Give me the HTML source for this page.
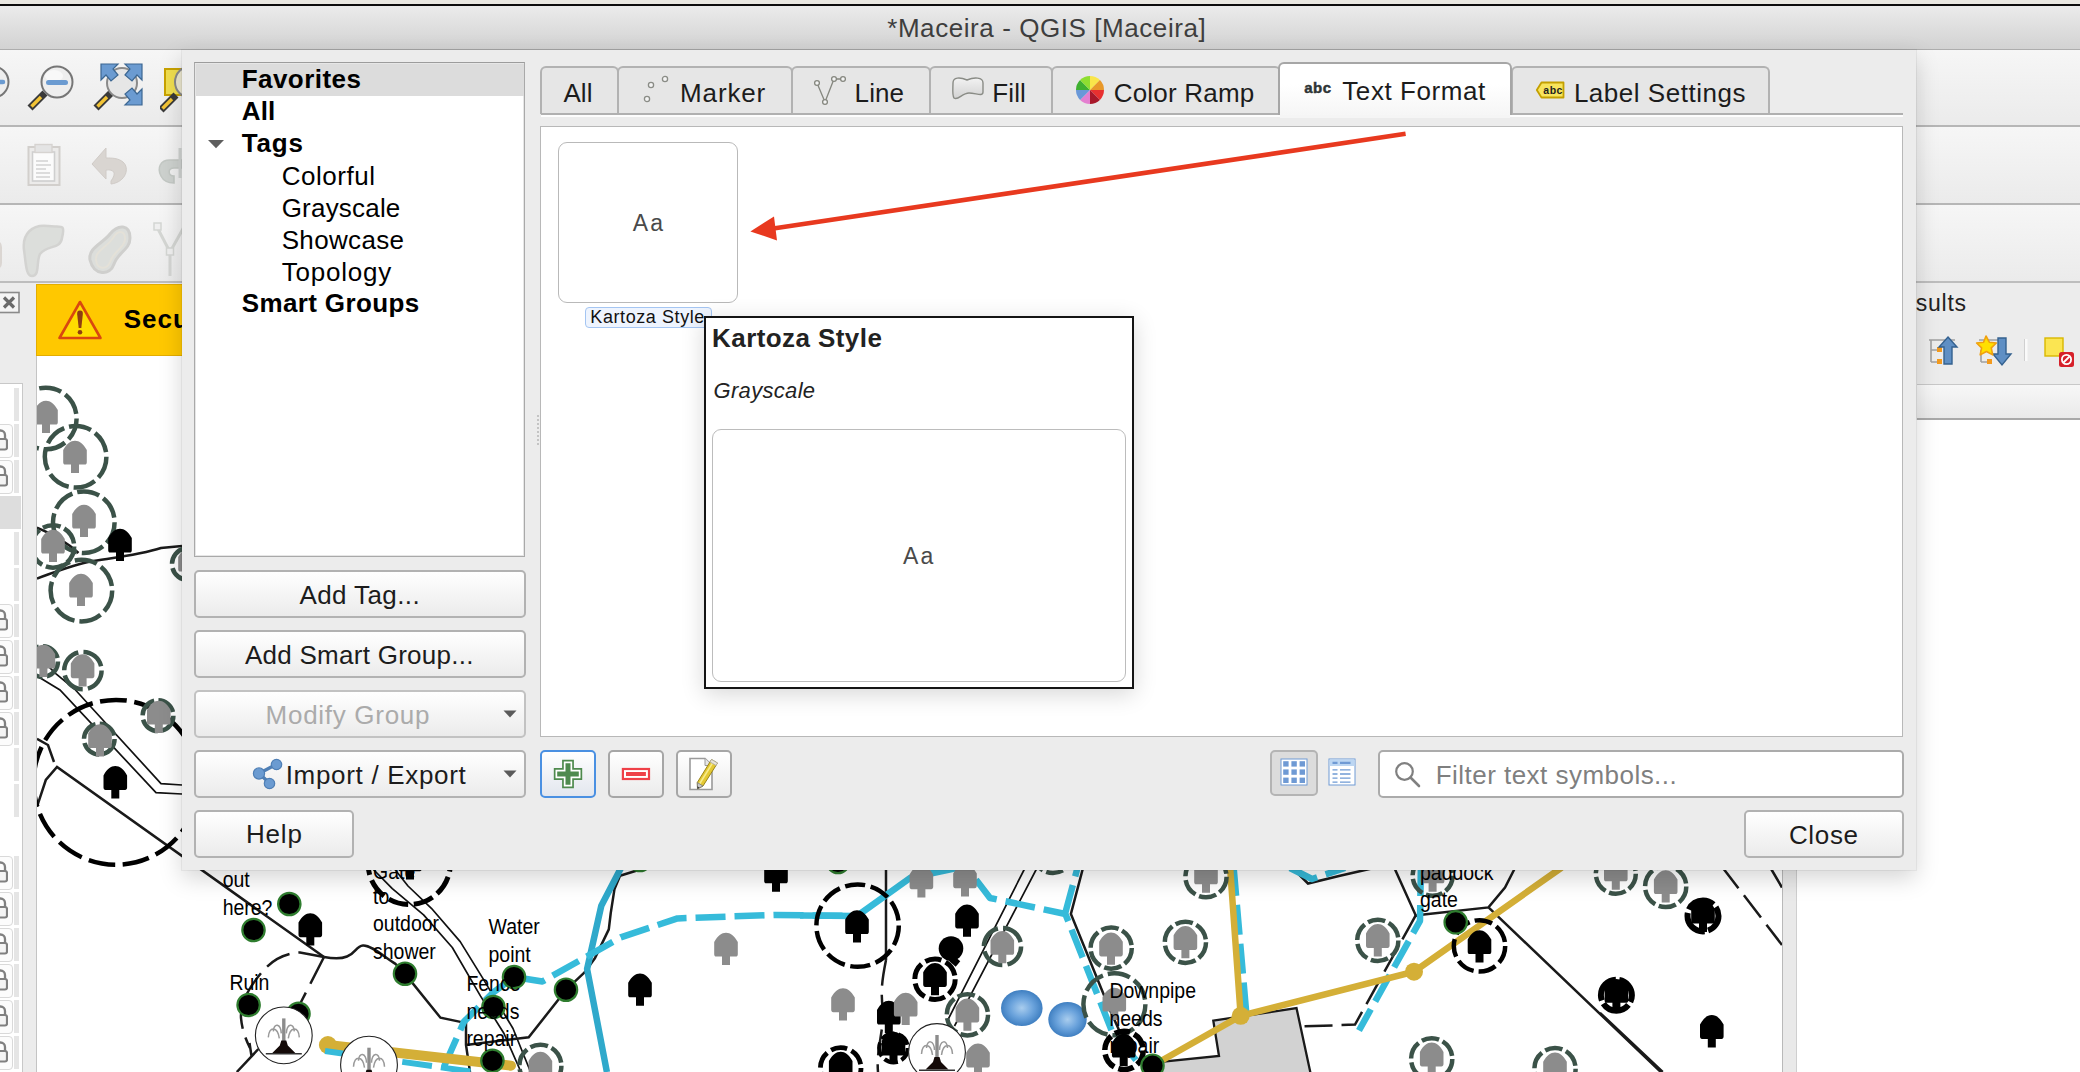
<!DOCTYPE html>
<html lang="en"><head><meta charset="utf-8"><title>*Maceira - QGIS [Maceira]</title>
<style>
html,body{margin:0;padding:0}
body{width:2080px;height:1072px;overflow:hidden;background:#ececec;font-family:"Liberation Sans", sans-serif;position:relative}
.a{position:absolute}
.t{position:absolute;white-space:nowrap}

.sep{position:absolute;left:0;width:2080px;height:2px;background:#b6b6b6}
.row{position:absolute;left:0;width:2080px;background:linear-gradient(#f6f6f6,#ebebeb)}

.dlg{position:absolute;left:182px;top:50px;width:1734px;height:820px;background:#ececec;box-shadow:0 8px 22px rgba(0,0,0,.17),0 0 0 1px rgba(0,0,0,.05)}
.btn{position:absolute;box-sizing:border-box;border:2px solid #b2b2b2;border-radius:5px;background:linear-gradient(#ffffff,#ebebeb)}
.tab{position:absolute;top:66px;height:48px;box-sizing:border-box;border:2px solid #b2b2b2;border-bottom:none;border-radius:6px 6px 0 0;background:#e6e6e6}

</style></head><body>
<div class="a" style="left:0;top:0;width:2080px;height:4px;background:#e9e7e1"></div>
<div class="a" style="left:0;top:4px;width:2080px;height:2px;background:#0c0c0c"></div>
<div class="a" style="left:0;top:6px;width:2080px;height:43px;background:linear-gradient(#ebebeb,#d2d2d2);border-bottom:1px solid #adadad"></div>
<span class="t" style="left:887.2px;top:12.5px;font-size:26px;line-height:31px;font-weight:normal;color:#3e3e3e;letter-spacing:0.57px;font-style:normal;">*Maceira - QGIS [Maceira]</span>
<div class="row" style="top:50px;height:75px"></div><div class="sep" style="top:125px"></div>
<div class="row" style="top:127px;height:76px"></div><div class="sep" style="top:203px"></div>
<div class="row" style="top:205px;height:76px"></div><div class="sep" style="top:281px;background:#bdbdbd"></div>
<svg class="a" style="left:-37px;top:65px" width="50" height="50" viewBox="0 0 50 50">
<path d="M3 43 L18 28" stroke="#3a3a3a" stroke-width="7" stroke-linecap="butt"/><path d="M4.5 41.5 L14 32" stroke="#f3c436" stroke-width="3.4"/>
<circle cx="30" cy="17" r="15.5" fill="#eeeeee" stroke="#767676" stroke-width="2"/><ellipse cx="27" cy="11" rx="9" ry="6" fill="#fafafa" opacity=".8"/><path d="M20 17h20M30 7v20" stroke="#6b9bd1" stroke-width="4.5" stroke-linecap="round"/></svg>
<svg class="a" style="left:27px;top:65px" width="50" height="50" viewBox="0 0 50 50">
<path d="M3 43 L18 28" stroke="#3a3a3a" stroke-width="7" stroke-linecap="butt"/><path d="M4.5 41.5 L14 32" stroke="#f3c436" stroke-width="3.4"/>
<circle cx="30" cy="17" r="15.5" fill="#eeeeee" stroke="#767676" stroke-width="2"/><ellipse cx="27" cy="11" rx="9" ry="6" fill="#fafafa" opacity=".8"/><path d="M21.5 17.5h17" stroke="#6b9bd1" stroke-width="5" stroke-linecap="round"/></svg>
<svg class="a" style="left:93px;top:62px" width="52" height="52" viewBox="0 0 52 52">
<path d="M3 46 L18 31" stroke="#3a3a3a" stroke-width="7"/><path d="M4.5 44.5 L14 35" stroke="#f3c436" stroke-width="3.4"/>
<circle cx="29" cy="21" r="15" fill="#e6e6e6" stroke="#8a8a8a" stroke-width="2"/>
<path d="M8 2h17l-5 5 5 6-7 6-5-6-5 5z" fill="#6b9bd1" stroke="#3c6792" stroke-width="1.2"/>
<path d="M49 2H32l5 5-5 6 7 6 5-6 5 5z" fill="#6b9bd1" stroke="#3c6792" stroke-width="1.2"/>
<path d="M49 43H32l5-5-5-6 7-6 5 6 5-5z" fill="#6b9bd1" stroke="#3c6792" stroke-width="1.2"/></svg>
<svg class="a" style="left:160px;top:62px" width="24" height="52" viewBox="0 0 24 52">
<rect x="5" y="7" width="22" height="26" fill="#f0de4f" stroke="#c8a200" stroke-width="2"/><circle cx="31" cy="20" r="16" fill="#ece8d0" stroke="#8a8a8a" stroke-width="2"/>
<path d="M1 48 L16 33" stroke="#3a3a3a" stroke-width="7"/><path d="M2.5 46.5 L12 37" stroke="#f3c436" stroke-width="3.4"/></svg>
<svg class="a" style="left:26px;top:142px" width="36" height="46" viewBox="0 0 36 46">
<rect x="2.5" y="5" width="31" height="38" fill="#ecebea" stroke="#d2cfcc" stroke-width="2"/>
<rect x="6.5" y="10" width="22" height="29" fill="#fbfbfb" stroke="#cfcfcf" stroke-width="1.6"/>
<rect x="9" y="2.5" width="17" height="8" fill="#e4e4e4" stroke="#d6d3d0" stroke-width="1.4"/>
<path d="M10 19h12M10 23h15M10 27h10M10 31h14M10 35h14" stroke="#d2d2d2" stroke-width="1.6"/></svg>
<svg class="a" style="left:90px;top:146px" width="40" height="40" viewBox="0 0 40 40">
<path d="M16 2 L2 18 L16 33 V24 C24 23 27 27 21 35 V38 C36 36 40 22 33 16 C28 12 22 12 16 12 Z" fill="#d9d5d1" stroke="#d0cbc7" stroke-width="1"/></svg>
<svg class="a" style="left:156px;top:146px" width="28" height="40" viewBox="0 0 28 40">
<path d="M26 14 H14 C4 14 1 22 5 30 C8 36 14 37 18 37 V30 C12 30 11 22 18 22 H26 Z" fill="#cdd1ce" stroke="#c3c8c4" stroke-width="1.6"/><path d="M24 2v30" stroke="#cfd2d0" stroke-width="3"/></svg>
<svg class="a" style="left:18px;top:220px" width="170" height="64" viewBox="0 0 170 64">
<path d="M6 30 C4 14 14 4 30 6 C42 8 48 2 44 18 C42 30 30 24 22 34 C18 42 22 56 14 56 C8 56 8 44 6 30 Z" fill="#dcdedb" stroke="#d3d3d1" stroke-width="2.5"/>
<path d="M72 40 C70 28 84 24 92 14 C100 4 112 4 112 18 C112 30 100 32 96 44 C92 56 76 56 72 40 Z" fill="#dcdedb" stroke="#cfcfcd" stroke-width="3"/>
<path d="M78 40 C77 31 88 28 95 18 C100 10 107 10 107 19 C107 28 96 30 92 42 C89 50 79 50 78 40 Z" fill="none" stroke="#e4e1d8" stroke-width="2"/>
<path d="M139 7 L152 32 V56 M152 32 L166 7" fill="none" stroke="#d4d6d3" stroke-width="3"/><rect x="136" y="3" width="7" height="7" fill="#efefef" stroke="#d4d6d3" stroke-width="1.5"/><rect x="148.500" y="28" width="7" height="7" fill="#efefef" stroke="#d4d6d3" stroke-width="1.5"/>
</svg>
<div class="a" style="left:-12px;top:240px;width:14px;height:30px;border-radius:7px;background:#dbd6d2"></div>
<div class="a" style="left:0;top:283px;width:2080px;height:73px;background:#ececec"></div>
<div class="a" style="left:36px;top:284px;width:1800px;height:70px;background:#ffc800;border:1px solid #e3ad00"></div>
<svg class="a" style="left:56px;top:298px" width="48" height="44" viewBox="0 0 48 44">
<path d="M24 4 L44.500 40 H3.500 Z" fill="#ffdc00" stroke="#d9480f" stroke-width="2.6" stroke-linejoin="round"/>
<path d="M24 12.500 c2.500 0 3 1.500 2.800 4 L25.300 30 h-2.600 L21.200 16.500 c-.2-2.500 .3-4 2.800-4z" fill="#8f3e12"/><circle cx="24" cy="34.300" r="2.300" fill="#8f3e12"/></svg>
<span class="t" style="left:123.7px;top:303.5px;font-size:26px;line-height:31px;font-weight:bold;color:#000;letter-spacing:1.00px;font-style:normal;">Secu</span>
<svg class="a" style="left:-2px;top:291px" width="24" height="24" viewBox="0 0 24 24">
<rect x="1" y="1.500" width="20" height="20" fill="#f4f4f4" stroke="#8a8a8a" stroke-width="1.6"/><path d="M6 6.500 L16 16.500 M16 6.500 L6 16.500" stroke="#6a6a6a" stroke-width="3.200"/></svg>
<div class="a" style="left:0;top:356px;width:37px;height:716px;background:#ececec;border-right:1px solid #c4c4c4;box-sizing:border-box"></div>
<div class="a" style="left:-2px;top:383px;width:23px;height:700px;background:#fff;border:1px solid #c8c8c8"></div>
<div class="a" style="left:0;top:496px;width:21px;height:33px;background:#dddddd"></div>
<div class="a" style="left:14px;top:388px;width:5px;height:33px;background:#e5e5e5"></div>
<div class="a" style="left:-6px;top:424px;width:17px;height:32px;border:1px solid #d9d9d9;border-radius:4px;background:#fcfcfc"></div><div class="a" style="left:14px;top:424px;width:5px;height:33px;background:#e5e5e5"></div>
<svg class="a" style="left:-8px;top:428px" width="16" height="24" viewBox="0 0 16 24"><path d="M4 11 V7 a4.500 4.500 0 0 1 9 0 V11" fill="none" stroke="#808080" stroke-width="2.300"/><rect x="1" y="11" width="14" height="10.500" rx="2" fill="#f4f4f4" stroke="#808080" stroke-width="2.200"/></svg>
<div class="a" style="left:-6px;top:460px;width:17px;height:32px;border:1px solid #d9d9d9;border-radius:4px;background:#fcfcfc"></div><div class="a" style="left:14px;top:460px;width:5px;height:33px;background:#e5e5e5"></div>
<svg class="a" style="left:-8px;top:464px" width="16" height="24" viewBox="0 0 16 24"><path d="M4 11 V7 a4.500 4.500 0 0 1 9 0 V11" fill="none" stroke="#808080" stroke-width="2.300"/><rect x="1" y="11" width="14" height="10.500" rx="2" fill="#f4f4f4" stroke="#808080" stroke-width="2.200"/></svg>
<div class="a" style="left:14px;top:532px;width:5px;height:33px;background:#e5e5e5"></div>
<div class="a" style="left:14px;top:568px;width:5px;height:33px;background:#e5e5e5"></div>
<div class="a" style="left:-6px;top:604px;width:17px;height:32px;border:1px solid #d9d9d9;border-radius:4px;background:#fcfcfc"></div><div class="a" style="left:14px;top:604px;width:5px;height:33px;background:#e5e5e5"></div>
<svg class="a" style="left:-8px;top:608px" width="16" height="24" viewBox="0 0 16 24"><path d="M4 11 V7 a4.500 4.500 0 0 1 9 0 V11" fill="none" stroke="#808080" stroke-width="2.300"/><rect x="1" y="11" width="14" height="10.500" rx="2" fill="#f4f4f4" stroke="#808080" stroke-width="2.200"/></svg>
<div class="a" style="left:-6px;top:640px;width:17px;height:32px;border:1px solid #d9d9d9;border-radius:4px;background:#fcfcfc"></div><div class="a" style="left:14px;top:640px;width:5px;height:33px;background:#e5e5e5"></div>
<svg class="a" style="left:-8px;top:644px" width="16" height="24" viewBox="0 0 16 24"><path d="M4 11 V7 a4.500 4.500 0 0 1 9 0 V11" fill="none" stroke="#808080" stroke-width="2.300"/><rect x="1" y="11" width="14" height="10.500" rx="2" fill="#f4f4f4" stroke="#808080" stroke-width="2.200"/></svg>
<div class="a" style="left:-6px;top:676px;width:17px;height:32px;border:1px solid #d9d9d9;border-radius:4px;background:#fcfcfc"></div><div class="a" style="left:14px;top:676px;width:5px;height:33px;background:#e5e5e5"></div>
<svg class="a" style="left:-8px;top:680px" width="16" height="24" viewBox="0 0 16 24"><path d="M4 11 V7 a4.500 4.500 0 0 1 9 0 V11" fill="none" stroke="#808080" stroke-width="2.300"/><rect x="1" y="11" width="14" height="10.500" rx="2" fill="#f4f4f4" stroke="#808080" stroke-width="2.200"/></svg>
<div class="a" style="left:-6px;top:712px;width:17px;height:32px;border:1px solid #d9d9d9;border-radius:4px;background:#fcfcfc"></div><div class="a" style="left:14px;top:712px;width:5px;height:33px;background:#e5e5e5"></div>
<svg class="a" style="left:-8px;top:716px" width="16" height="24" viewBox="0 0 16 24"><path d="M4 11 V7 a4.500 4.500 0 0 1 9 0 V11" fill="none" stroke="#808080" stroke-width="2.300"/><rect x="1" y="11" width="14" height="10.500" rx="2" fill="#f4f4f4" stroke="#808080" stroke-width="2.200"/></svg>
<div class="a" style="left:14px;top:748px;width:5px;height:33px;background:#e5e5e5"></div>
<div class="a" style="left:14px;top:784px;width:5px;height:33px;background:#e5e5e5"></div>
<div class="a" style="left:-6px;top:856px;width:17px;height:32px;border:1px solid #d9d9d9;border-radius:4px;background:#fcfcfc"></div><div class="a" style="left:14px;top:856px;width:5px;height:33px;background:#e5e5e5"></div>
<svg class="a" style="left:-8px;top:860px" width="16" height="24" viewBox="0 0 16 24"><path d="M4 11 V7 a4.500 4.500 0 0 1 9 0 V11" fill="none" stroke="#808080" stroke-width="2.300"/><rect x="1" y="11" width="14" height="10.500" rx="2" fill="#f4f4f4" stroke="#808080" stroke-width="2.200"/></svg>
<div class="a" style="left:-6px;top:892px;width:17px;height:32px;border:1px solid #d9d9d9;border-radius:4px;background:#fcfcfc"></div><div class="a" style="left:14px;top:892px;width:5px;height:33px;background:#e5e5e5"></div>
<svg class="a" style="left:-8px;top:896px" width="16" height="24" viewBox="0 0 16 24"><path d="M4 11 V7 a4.500 4.500 0 0 1 9 0 V11" fill="none" stroke="#808080" stroke-width="2.300"/><rect x="1" y="11" width="14" height="10.500" rx="2" fill="#f4f4f4" stroke="#808080" stroke-width="2.200"/></svg>
<div class="a" style="left:-6px;top:928px;width:17px;height:32px;border:1px solid #d9d9d9;border-radius:4px;background:#fcfcfc"></div><div class="a" style="left:14px;top:928px;width:5px;height:33px;background:#e5e5e5"></div>
<svg class="a" style="left:-8px;top:932px" width="16" height="24" viewBox="0 0 16 24"><path d="M4 11 V7 a4.500 4.500 0 0 1 9 0 V11" fill="none" stroke="#808080" stroke-width="2.300"/><rect x="1" y="11" width="14" height="10.500" rx="2" fill="#f4f4f4" stroke="#808080" stroke-width="2.200"/></svg>
<div class="a" style="left:-6px;top:964px;width:17px;height:32px;border:1px solid #d9d9d9;border-radius:4px;background:#fcfcfc"></div><div class="a" style="left:14px;top:964px;width:5px;height:33px;background:#e5e5e5"></div>
<svg class="a" style="left:-8px;top:968px" width="16" height="24" viewBox="0 0 16 24"><path d="M4 11 V7 a4.500 4.500 0 0 1 9 0 V11" fill="none" stroke="#808080" stroke-width="2.300"/><rect x="1" y="11" width="14" height="10.500" rx="2" fill="#f4f4f4" stroke="#808080" stroke-width="2.200"/></svg>
<div class="a" style="left:-6px;top:1000px;width:17px;height:32px;border:1px solid #d9d9d9;border-radius:4px;background:#fcfcfc"></div><div class="a" style="left:14px;top:1000px;width:5px;height:33px;background:#e5e5e5"></div>
<svg class="a" style="left:-8px;top:1004px" width="16" height="24" viewBox="0 0 16 24"><path d="M4 11 V7 a4.500 4.500 0 0 1 9 0 V11" fill="none" stroke="#808080" stroke-width="2.300"/><rect x="1" y="11" width="14" height="10.500" rx="2" fill="#f4f4f4" stroke="#808080" stroke-width="2.200"/></svg>
<div class="a" style="left:-6px;top:1036px;width:17px;height:32px;border:1px solid #d9d9d9;border-radius:4px;background:#fcfcfc"></div><div class="a" style="left:14px;top:1036px;width:5px;height:33px;background:#e5e5e5"></div>
<svg class="a" style="left:-8px;top:1040px" width="16" height="24" viewBox="0 0 16 24"><path d="M4 11 V7 a4.500 4.500 0 0 1 9 0 V11" fill="none" stroke="#808080" stroke-width="2.300"/><rect x="1" y="11" width="14" height="10.500" rx="2" fill="#f4f4f4" stroke="#808080" stroke-width="2.200"/></svg>
<div class="a" style="left:1917px;top:283px;width:163px;height:101px;background:#ececec"></div>
<span class="t" style="left:1915.8px;top:288.7px;font-size:23px;line-height:28px;font-weight:normal;color:#222;letter-spacing:0.73px;font-style:normal;">sults</span>
<svg class="a" style="left:1924px;top:334px" width="156" height="38" viewBox="0 0 156 38">
<path d="M5 6h26M7 6v22M7 16h6M7 28h6" stroke="#a0a0a0" stroke-width="1.6" fill="none"/><rect x="13" y="13" width="5" height="5" fill="#f39a1d"/><rect x="13" y="25" width="5" height="5" fill="#f39a1d"/>
<path d="M24 3 L33 13 H28 V30 H20 V13 H15 Z" fill="#5f8fc4" stroke="#34618f" stroke-width="1.4"/>
<path d="M55 6h26M57 16v12M57 28h6" stroke="#a0a0a0" stroke-width="1.6" fill="none"/><rect x="63" y="25" width="5" height="5" fill="#f39a1d"/>
<path d="M74 4 V20 H69 L78 31 L87 20 H82 V4 Z" fill="#5f8fc4" stroke="#34618f" stroke-width="1.4"/>
<path d="M62 2 l3.300 6.200 7 .8 -5 4.900 1.400 7 -6.300-3.400 -6.200 3.400 1.400-7 -5-4.900 7-.8z" fill="#ffe000" stroke="#f0a010" stroke-width="1.6" stroke-linejoin="round"/>
<path d="M102 5v22" stroke="#fafafa" stroke-width="3"/><path d="M100.500 5v22" stroke="#d0d0d0" stroke-width="1"/>
<rect x="121" y="4" width="18" height="18" fill="#fbe552" stroke="#d9b800" stroke-width="1.4"/>
<rect x="135" y="18" width="15" height="15" rx="2.500" fill="#d6202a"/><circle cx="142.500" cy="25.500" r="4.600" fill="none" stroke="#fff" stroke-width="1.800"/><path d="M139.500 28.500l6-6" stroke="#fff" stroke-width="1.800"/>
</svg>
<div class="a" style="left:1917px;top:384px;width:163px;height:1px;background:#c8c8c8"></div>
<div class="a" style="left:1917px;top:385px;width:163px;height:33px;background:linear-gradient(#f7f7f7,#eaeaea)"></div>
<div class="a" style="left:1917px;top:418px;width:163px;height:2px;background:#a9a9a9"></div>
<div class="a" style="left:1797px;top:420px;width:283px;height:652px;background:#fff"></div>
<div class="a" style="left:1782px;top:356px;width:15px;height:716px;background:#e9e9e9;border-left:1px solid #b9b9b9;border-right:1px solid #cfcfcf;box-sizing:border-box"></div>
<div class="a" style="left:37px;top:356px;width:1745px;height:716px;background:#fff;overflow:hidden"><svg width="1745" height="716" viewBox="37 356 1745 716" style="position:absolute;left:0;top:0"><path fill="none" stroke="#1a1a1a" stroke-width="2.500" d="M37 578.500C58 571 74 564.500 90.600 561.500S140 555 161 548L182 546M37 527.600C55 535 70 545 78.500 553"/>
<path fill="none" stroke="#111" stroke-width="1.700" d="M37 676L60 690 156 792.600 182 794M37 655L55.800 673.600 74.800 689.300 161 783.600 182 785"/>
<path fill="none" stroke="#1a1a1a" stroke-width="2.500" d="M37 738.800L48 745 54 762M37 806.700L45.800 780 57 767 324 957"/>
<circle cx="116.0" cy="782.3" r="82.4" fill="none" stroke="#000" stroke-width="4.5" stroke-dasharray="26.92 7.59" stroke-dashoffset="8"/>
<circle cx="45.8" cy="418.5" r="30.8" fill="none" stroke="#3b5248" stroke-width="4.500" stroke-dasharray="22.67 4.98" stroke-dashoffset="0"/>
<circle cx="75.6" cy="456.8" r="30.8" fill="none" stroke="#3b5248" stroke-width="4.500" stroke-dasharray="22.67 4.98" stroke-dashoffset="0"/>
<circle cx="83.8" cy="522.2" r="30.8" fill="none" stroke="#3b5248" stroke-width="4.500" stroke-dasharray="22.67 4.98" stroke-dashoffset="0"/>
<circle cx="53.0" cy="546.5" r="21.2" fill="none" stroke="#3b5248" stroke-width="4.500" stroke-dasharray="18.20 4.00" stroke-dashoffset="0"/>
<circle cx="81.4" cy="590.6" r="30.8" fill="none" stroke="#3b5248" stroke-width="4.500" stroke-dasharray="22.67 4.98" stroke-dashoffset="0"/>
<circle cx="188.0" cy="564.0" r="16" fill="none" stroke="#3b5248" stroke-width="4.500" stroke-dasharray="20.61 4.52" stroke-dashoffset="0"/>
<circle cx="42.6" cy="661.6" r="15.4" fill="none" stroke="#3b5248" stroke-width="4.500" stroke-dasharray="19.84 4.35" stroke-dashoffset="0"/>
<circle cx="82.9" cy="670.6" r="18.7" fill="none" stroke="#3b5248" stroke-width="4.500" stroke-dasharray="24.09 5.29" stroke-dashoffset="0"/>
<circle cx="158.0" cy="715.7" r="15.4" fill="none" stroke="#3b5248" stroke-width="4.500" stroke-dasharray="19.84 4.35" stroke-dashoffset="0"/>
<circle cx="99.3" cy="739.1" r="15.3" fill="none" stroke="#3b5248" stroke-width="4.500" stroke-dasharray="19.71 4.33" stroke-dashoffset="0"/>
<path transform="translate(46.0 417.0)" fill="#8c8c8c" d="M0-16.300C4.500-16.300 8-13.500 11.800-7V5.200C11.800 6.800 11 7.600 9.800 7.600H4V16H-4V7.600H-9.800C-11 7.600-11.800 6.800-11.800 5.200V-7C-8-13.500-4.500-16.300 0-16.300Z"/>
<path transform="translate(75.0 457.0)" fill="#8c8c8c" d="M0-16.300C4.500-16.300 8-13.500 11.800-7V5.200C11.800 6.800 11 7.600 9.800 7.600H4V16H-4V7.600H-9.800C-11 7.600-11.800 6.800-11.800 5.200V-7C-8-13.500-4.500-16.300 0-16.300Z"/>
<path transform="translate(84.0 521.0)" fill="#8c8c8c" d="M0-16.300C4.500-16.300 8-13.500 11.800-7V5.200C11.800 6.800 11 7.600 9.800 7.600H4V16H-4V7.600H-9.800C-11 7.600-11.800 6.800-11.800 5.200V-7C-8-13.500-4.500-16.300 0-16.300Z"/>
<path transform="translate(53.0 546.0)" fill="#8c8c8c" d="M0-16.300C4.500-16.300 8-13.500 11.800-7V5.200C11.800 6.800 11 7.600 9.800 7.600H4V16H-4V7.600H-9.800C-11 7.600-11.800 6.800-11.800 5.200V-7C-8-13.500-4.500-16.300 0-16.300Z"/>
<path transform="translate(81.0 590.0)" fill="#8c8c8c" d="M0-16.300C4.500-16.300 8-13.500 11.800-7V5.200C11.800 6.800 11 7.600 9.800 7.600H4V16H-4V7.600H-9.800C-11 7.600-11.800 6.800-11.800 5.200V-7C-8-13.500-4.500-16.300 0-16.300Z"/>
<path transform="translate(190.0 564.0)" fill="#8c8c8c" d="M0-16.300C4.500-16.300 8-13.500 11.800-7V5.200C11.800 6.800 11 7.600 9.800 7.600H4V16H-4V7.600H-9.800C-11 7.600-11.800 6.800-11.800 5.200V-7C-8-13.500-4.500-16.300 0-16.300Z"/>
<path transform="translate(43.4 661.0)" fill="#8c8c8c" d="M0-16.300C4.500-16.300 8-13.500 11.800-7V5.200C11.800 6.800 11 7.600 9.800 7.600H4V16H-4V7.600H-9.800C-11 7.600-11.800 6.800-11.800 5.200V-7C-8-13.500-4.500-16.300 0-16.300Z"/>
<path transform="translate(82.6 670.6)" fill="#8c8c8c" d="M0-16.300C4.500-16.300 8-13.500 11.800-7V5.200C11.800 6.800 11 7.600 9.800 7.600H4V16H-4V7.600H-9.800C-11 7.600-11.800 6.800-11.800 5.200V-7C-8-13.500-4.500-16.300 0-16.300Z"/>
<path transform="translate(158.8 717.0)" fill="#8c8c8c" d="M0-16.300C4.500-16.300 8-13.500 11.800-7V5.200C11.800 6.800 11 7.600 9.800 7.600H4V16H-4V7.600H-9.800C-11 7.600-11.800 6.800-11.800 5.200V-7C-8-13.500-4.500-16.300 0-16.300Z"/>
<path transform="translate(100.0 740.5)" fill="#8c8c8c" d="M0-16.300C4.500-16.300 8-13.500 11.800-7V5.200C11.800 6.800 11 7.600 9.800 7.600H4V16H-4V7.600H-9.800C-11 7.600-11.800 6.800-11.800 5.200V-7C-8-13.500-4.500-16.300 0-16.300Z"/>
<path transform="translate(120.0 545.0)" fill="#000" d="M0-16.300C4.500-16.300 8-13.500 11.800-7V5.200C11.800 6.800 11 7.600 9.800 7.600H4V16H-4V7.600H-9.800C-11 7.600-11.800 6.800-11.800 5.200V-7C-8-13.500-4.500-16.300 0-16.300Z"/>
<path transform="translate(115.3 782.4)" fill="#000" d="M0-16.300C4.500-16.300 8-13.500 11.800-7V5.200C11.800 6.800 11 7.600 9.800 7.600H4V16H-4V7.600H-9.800C-11 7.600-11.800 6.800-11.800 5.200V-7C-8-13.500-4.500-16.300 0-16.300Z"/>
<path fill="none" stroke="#1a1a1a" stroke-width="2.500" d="M324 957C332 958.500 340 959.500 347 956.500 356 953 356 946 363 945.500 371 945 383 956 395.500 963.900L404.900 973.700 440.500 1017.700 464 1022.600"/>
<path fill="none" stroke="#1a1a1a" stroke-width="2.500" stroke-dasharray="26 9" d="M324 957L300 952.500C285 953 272 960 262 972 250 986 240 1002 241 1018 242 1030 246 1040 250 1048"/>
<path fill="none" stroke="#1a1a1a" stroke-width="2.500" stroke-dasharray="30 10" d="M324 957L300 1004"/>
<path fill="none" stroke="#1a1a1a" stroke-width="2.500" d="M236.800 1072L258.400 1049M249.500 1043L251.500 1056"/>
<path fill="none" stroke="#111" stroke-width="1.700" stroke-linejoin="round" d="M389 862L408 886 431.400 908.300 460.200 941.600 482.400 977.600 513 1028.500 530.600 1072M366 862L392.300 888.700 423.600 914.900 452.300 947.500 480.400 995.900 504 1033.500 521 1072"/>
<path fill="none" stroke="#1a1a1a" stroke-width="2.500" d="M566 990L528.700 1037.300 466 1045M466 1022L466 1045 470 1072"/>
<path fill="none" stroke="#1a1a1a" stroke-width="2.500" stroke-linejoin="round" d="M645 868L620 875.700 614.500 888.900 610.700 913.400 608.800 929.400 594.700 958.600 584.300 972.700 565.400 990.300"/>
<path fill="none" stroke="#1a1a1a" stroke-width="2.500" d="M886 868V960"/><path fill="none" stroke="#1a1a1a" stroke-width="2.500" stroke-dasharray="26 9" d="M886 960C883 975 880 990 883 1010 884 1030 876 1050 878 1072"/>
<path fill="none" stroke="#111" stroke-width="1.700" d="M1025 868L948.500 1018.700M1037 868L954.500 1026"/>
<path fill="none" stroke="#1a1a1a" stroke-width="2.500" d="M1083 868L1070.900 914 1110.400 1010.900 1128 1050"/>
<path fill="none" stroke="#1a1a1a" stroke-width="2.500" d="M1290.600 866L1308 883.500 1340 875.700 1400 862"/>
<path fill="none" stroke="#1a1a1a" stroke-width="2.500" d="M1393.500 866L1416 915.900 1423.800 914.500 1488.500 907.400 1505 887.500 1516 866M1488.500 907.400L1660.800 1072M1600 1012.800L1662.700 1072"/>
<path fill="none" stroke="#1a1a1a" stroke-width="2.500" stroke-dasharray="28 9" d="M1416 914.900L1355 1024.600 1300 1026.500M1721.400 866L1782 945M1769.400 866L1782 887.500"/>
<path d="M1213.300 1020.700L1296.500 1008 1312 1080H1150L1161 1061.800 1219 1056Z" fill="#d2d2d2" stroke="#1a1a1a" stroke-width="2.300"/>
<path fill="none" stroke="#2fa9cb" stroke-width="6.500" stroke-linejoin="round" d="M622 866L601.300 905.800 587.100 969 606.900 1072"/>
<path fill="none" stroke="#36bbda" stroke-width="6.500" stroke-linejoin="round" stroke-dasharray="30 9" d="M444.400 1065.700L464 1021.600 493.400 992.300 514 977 542.400 981.500 620.700 937.400 677.500 918.400 775.500 914.900 857 916"/>
<path fill="none" stroke="#36bbda" stroke-width="6.500" stroke-linejoin="round" d="M800 915.500L857 916 910.600 877.700 985 862"/>
<path fill="none" stroke="#36bbda" stroke-width="6.500" stroke-linejoin="round" stroke-dasharray="30 9" d="M976 879.600L990 898 1065.400 914 1112.400 1032.400 1136 1060M1065 914L1078 866"/>
<path fill="none" stroke="#36bbda" stroke-width="6.500" stroke-linejoin="round" stroke-dasharray="30 9" d="M1233.500 866L1246.600 1016.700M1420.900 866L1420 920.800 1359 1030.500M1290 868L1312 879 1345 868"/>
<path fill="none" stroke="#d4af37" stroke-linecap="round" stroke-width="10" d="M327.900 1045L511 1065.700"/><circle cx="327.900" cy="1045" r="9" fill="#d4af37"/>
<path fill="none" stroke="#36bbda" stroke-width="6" stroke-dasharray="30 9" d="M325 1051L473.800 1072"/>
<path fill="none" stroke="#d4af37" stroke-linecap="round" stroke-width="6.500" d="M1152 1066L1240.700 1015.800 1414 971.700 1561 868M1240.700 1015.800L1230 866"/><circle cx="1240.700" cy="1015.800" r="9" fill="#d4af37"/><circle cx="1414" cy="971.700" r="9" fill="#d4af37"/>
<defs><radialGradient id="pond"><stop offset="0" stop-color="#a9cdee"/><stop offset=".55" stop-color="#6ba3dc"/><stop offset="1" stop-color="#3f7fc1"/></radialGradient></defs>
<ellipse cx="1021.800" cy="1008" rx="20.800" ry="18" fill="url(#pond)"/><ellipse cx="1067.500" cy="1019.500" rx="19.200" ry="17.600" fill="url(#pond)"/>
<circle cx="1002.5" cy="946.5" r="18.6" fill="none" stroke="#3b5248" stroke-width="4.500" stroke-dasharray="23.96 5.26" stroke-dashoffset="0"/>
<circle cx="1111.2" cy="948.1" r="20.6" fill="none" stroke="#3b5248" stroke-width="4.500" stroke-dasharray="17.69 3.88" stroke-dashoffset="0"/>
<circle cx="1185.4" cy="942.3" r="20.6" fill="none" stroke="#3b5248" stroke-width="4.500" stroke-dasharray="17.69 3.88" stroke-dashoffset="0"/>
<circle cx="1206.0" cy="876.7" r="20.6" fill="none" stroke="#3b5248" stroke-width="4.500" stroke-dasharray="17.69 3.88" stroke-dashoffset="0"/>
<circle cx="967.4" cy="1014.8" r="20.6" fill="none" stroke="#3b5248" stroke-width="4.500" stroke-dasharray="17.69 3.88" stroke-dashoffset="0"/>
<circle cx="1114.4" cy="1004.3" r="31" fill="none" stroke="#3b5248" stroke-width="4.500" stroke-dasharray="22.82 5.01" stroke-dashoffset="0"/>
<circle cx="540.4" cy="1065.7" r="21" fill="none" stroke="#3b5248" stroke-width="4.500" stroke-dasharray="18.03 3.96" stroke-dashoffset="0"/>
<circle cx="1432.6" cy="875.7" r="20" fill="none" stroke="#3b5248" stroke-width="4.500" stroke-dasharray="17.17 3.77" stroke-dashoffset="0"/>
<circle cx="1377.8" cy="940.4" r="20.6" fill="none" stroke="#3b5248" stroke-width="4.500" stroke-dasharray="17.69 3.88" stroke-dashoffset="0"/>
<circle cx="1615.8" cy="873.7" r="20" fill="none" stroke="#3b5248" stroke-width="4.500" stroke-dasharray="17.17 3.77" stroke-dashoffset="0"/>
<circle cx="1665.7" cy="886.5" r="20.6" fill="none" stroke="#3b5248" stroke-width="4.500" stroke-dasharray="17.69 3.88" stroke-dashoffset="0"/>
<circle cx="1431.7" cy="1058.9" r="20.6" fill="none" stroke="#3b5248" stroke-width="4.500" stroke-dasharray="17.69 3.88" stroke-dashoffset="0"/>
<circle cx="1555.0" cy="1068.7" r="20.6" fill="none" stroke="#3b5248" stroke-width="4.500" stroke-dasharray="17.69 3.88" stroke-dashoffset="0"/>
<circle cx="1053.0" cy="853.0" r="20" fill="none" stroke="#3b5248" stroke-width="4.500" stroke-dasharray="17.17 3.77" stroke-dashoffset="0"/>
<path transform="translate(888.8 1017.0)" fill="#000" d="M0-16.300C4.500-16.300 8-13.500 11.800-7V5.200C11.800 6.800 11 7.600 9.800 7.600H4V16H-4V7.600H-9.800C-11 7.600-11.800 6.800-11.800 5.200V-7C-8-13.500-4.500-16.300 0-16.300Z"/>
<path transform="translate(1002.3 947.2)" fill="#8c8c8c" d="M0-16.300C4.500-16.300 8-13.500 11.800-7V5.200C11.800 6.800 11 7.600 9.800 7.600H4V16H-4V7.600H-9.800C-11 7.600-11.800 6.800-11.800 5.200V-7C-8-13.500-4.500-16.300 0-16.300Z"/>
<path transform="translate(1111.0 948.8)" fill="#8c8c8c" d="M0-16.300C4.500-16.300 8-13.500 11.800-7V5.200C11.800 6.800 11 7.600 9.800 7.600H4V16H-4V7.600H-9.800C-11 7.600-11.800 6.800-11.800 5.200V-7C-8-13.500-4.500-16.300 0-16.300Z"/>
<path transform="translate(1185.4 942.3)" fill="#8c8c8c" d="M0-16.300C4.500-16.300 8-13.500 11.800-7V5.200C11.800 6.800 11 7.600 9.800 7.600H4V16H-4V7.600H-9.800C-11 7.600-11.800 6.800-11.800 5.200V-7C-8-13.500-4.500-16.300 0-16.300Z"/>
<path transform="translate(1206.0 876.7)" fill="#8c8c8c" d="M0-16.300C4.500-16.300 8-13.500 11.800-7V5.200C11.800 6.800 11 7.600 9.800 7.600H4V16H-4V7.600H-9.800C-11 7.600-11.800 6.800-11.800 5.200V-7C-8-13.500-4.500-16.300 0-16.300Z"/>
<path transform="translate(967.4 1014.8)" fill="#8c8c8c" d="M0-16.300C4.500-16.300 8-13.500 11.800-7V5.200C11.800 6.800 11 7.600 9.800 7.600H4V16H-4V7.600H-9.800C-11 7.600-11.800 6.800-11.800 5.200V-7C-8-13.500-4.500-16.300 0-16.300Z"/>
<path transform="translate(1114.3 1004.0)" fill="#8c8c8c" d="M0-16.300C4.500-16.300 8-13.500 11.800-7V5.200C11.800 6.800 11 7.600 9.800 7.600H4V16H-4V7.600H-9.800C-11 7.600-11.800 6.800-11.800 5.200V-7C-8-13.500-4.500-16.300 0-16.300Z"/>
<path transform="translate(540.4 1068.0)" fill="#8c8c8c" d="M0-16.300C4.500-16.300 8-13.500 11.800-7V5.200C11.800 6.800 11 7.600 9.800 7.600H4V16H-4V7.600H-9.800C-11 7.600-11.800 6.800-11.800 5.200V-7C-8-13.500-4.500-16.300 0-16.300Z"/>
<path transform="translate(1432.6 875.7)" fill="#8c8c8c" d="M0-16.300C4.500-16.300 8-13.500 11.800-7V5.200C11.800 6.800 11 7.600 9.800 7.600H4V16H-4V7.600H-9.800C-11 7.600-11.800 6.800-11.800 5.200V-7C-8-13.500-4.500-16.300 0-16.300Z"/>
<path transform="translate(1377.8 940.4)" fill="#8c8c8c" d="M0-16.300C4.500-16.300 8-13.500 11.800-7V5.200C11.800 6.800 11 7.600 9.800 7.600H4V16H-4V7.600H-9.800C-11 7.600-11.800 6.800-11.800 5.200V-7C-8-13.500-4.500-16.300 0-16.300Z"/>
<path transform="translate(1615.8 873.7)" fill="#8c8c8c" d="M0-16.300C4.500-16.300 8-13.500 11.800-7V5.200C11.800 6.800 11 7.600 9.800 7.600H4V16H-4V7.600H-9.800C-11 7.600-11.800 6.800-11.800 5.200V-7C-8-13.500-4.500-16.300 0-16.300Z"/>
<path transform="translate(1665.7 886.5)" fill="#8c8c8c" d="M0-16.300C4.500-16.300 8-13.500 11.800-7V5.200C11.800 6.800 11 7.600 9.800 7.600H4V16H-4V7.600H-9.800C-11 7.600-11.800 6.800-11.800 5.200V-7C-8-13.500-4.500-16.300 0-16.300Z"/>
<path transform="translate(1431.7 1058.9)" fill="#8c8c8c" d="M0-16.300C4.500-16.300 8-13.500 11.800-7V5.200C11.800 6.800 11 7.600 9.800 7.600H4V16H-4V7.600H-9.800C-11 7.600-11.800 6.800-11.800 5.200V-7C-8-13.500-4.500-16.300 0-16.300Z"/>
<path transform="translate(1555.0 1068.7)" fill="#8c8c8c" d="M0-16.300C4.500-16.300 8-13.500 11.800-7V5.200C11.800 6.800 11 7.600 9.800 7.600H4V16H-4V7.600H-9.800C-11 7.600-11.800 6.800-11.800 5.200V-7C-8-13.500-4.500-16.300 0-16.300Z"/>
<path transform="translate(726.0 949.0)" fill="#8c8c8c" d="M0-16.300C4.500-16.300 8-13.500 11.800-7V5.200C11.800 6.800 11 7.600 9.800 7.600H4V16H-4V7.600H-9.800C-11 7.600-11.800 6.800-11.800 5.200V-7C-8-13.500-4.500-16.300 0-16.300Z"/>
<path transform="translate(843.0 1004.6)" fill="#8c8c8c" d="M0-16.300C4.500-16.300 8-13.500 11.800-7V5.200C11.800 6.800 11 7.600 9.800 7.600H4V16H-4V7.600H-9.800C-11 7.600-11.800 6.800-11.800 5.200V-7C-8-13.500-4.500-16.300 0-16.300Z"/>
<path transform="translate(921.4 881.6)" fill="#8c8c8c" d="M0-16.300C4.500-16.300 8-13.500 11.800-7V5.200C11.800 6.800 11 7.600 9.800 7.600H4V16H-4V7.600H-9.800C-11 7.600-11.800 6.800-11.800 5.200V-7C-8-13.500-4.500-16.300 0-16.300Z"/>
<path transform="translate(965.0 880.6)" fill="#8c8c8c" d="M0-16.300C4.500-16.300 8-13.500 11.800-7V5.200C11.800 6.800 11 7.600 9.800 7.600H4V16H-4V7.600H-9.800C-11 7.600-11.800 6.800-11.800 5.200V-7C-8-13.500-4.500-16.300 0-16.300Z"/>
<path transform="translate(905.7 1009.0)" fill="#8c8c8c" d="M0-16.300C4.500-16.300 8-13.500 11.800-7V5.200C11.800 6.800 11 7.600 9.800 7.600H4V16H-4V7.600H-9.800C-11 7.600-11.800 6.800-11.800 5.200V-7C-8-13.500-4.500-16.300 0-16.300Z"/>
<path transform="translate(978.0 1059.8)" fill="#8c8c8c" d="M0-16.300C4.500-16.300 8-13.500 11.800-7V5.200C11.800 6.800 11 7.600 9.800 7.600H4V16H-4V7.600H-9.800C-11 7.600-11.800 6.800-11.800 5.200V-7C-8-13.500-4.500-16.300 0-16.300Z"/>
<circle cx="409.2" cy="863.3" r="41.2" fill="none" stroke="#000" stroke-width="5" stroke-dasharray="20.19 5.70" stroke-dashoffset="12"/>
<circle cx="857.6" cy="925.6" r="41.2" fill="none" stroke="#000" stroke-width="4.5" stroke-dasharray="20.19 5.70" stroke-dashoffset="0"/>
<circle cx="935.0" cy="979.3" r="20.2" fill="none" stroke="#000" stroke-width="5" stroke-dasharray="16.50 4.65" stroke-dashoffset="0"/>
<circle cx="893.5" cy="1048.0" r="14.3" fill="none" stroke="#000" stroke-width="4.2" stroke-dasharray="14.02 3.95" stroke-dashoffset="0"/>
<circle cx="840.7" cy="1068.0" r="20.3" fill="none" stroke="#000" stroke-width="4.8" stroke-dasharray="16.58 4.68" stroke-dashoffset="0"/>
<circle cx="1124.0" cy="1050.4" r="19.2" fill="none" stroke="#000" stroke-width="5.5" stroke-dasharray="15.68 4.42" stroke-dashoffset="0"/>
<circle cx="1479.5" cy="945.9" r="25.7" fill="none" stroke="#000" stroke-width="4.5" stroke-dasharray="17.99 5.08" stroke-dashoffset="0"/>
<circle cx="1703" cy="915.900" r="15.500" fill="none" stroke="#000" stroke-width="6" stroke-dasharray="29 3.500" stroke-dashoffset="10"/>
<circle cx="1616.400" cy="995.200" r="15.500" fill="none" stroke="#000" stroke-width="6" stroke-dasharray="29 3.500" stroke-dashoffset="22"/>
<path transform="translate(310.3 929.6)" fill="#000" d="M0-16.300C4.500-16.300 8-13.500 11.800-7V5.200C11.800 6.800 11 7.600 9.800 7.600H4V16H-4V7.600H-9.800C-11 7.600-11.800 6.800-11.800 5.200V-7C-8-13.500-4.500-16.300 0-16.300Z"/>
<path transform="translate(776.0 875.7)" fill="#000" d="M0-16.300C4.500-16.300 8-13.500 11.800-7V5.200C11.800 6.800 11 7.600 9.800 7.600H4V16H-4V7.600H-9.800C-11 7.600-11.800 6.800-11.800 5.200V-7C-8-13.500-4.500-16.300 0-16.300Z"/>
<path transform="translate(640.0 989.7)" fill="#000" d="M0-16.300C4.500-16.300 8-13.500 11.800-7V5.200C11.800 6.800 11 7.600 9.800 7.600H4V16H-4V7.600H-9.800C-11 7.600-11.800 6.800-11.800 5.200V-7C-8-13.500-4.500-16.300 0-16.300Z"/>
<path transform="translate(857.0 926.5)" fill="#000" d="M0-16.300C4.500-16.300 8-13.500 11.800-7V5.200C11.800 6.800 11 7.600 9.800 7.600H4V16H-4V7.600H-9.800C-11 7.600-11.800 6.800-11.800 5.200V-7C-8-13.500-4.500-16.300 0-16.300Z"/>
<path transform="translate(935.0 979.3)" fill="#000" d="M0-16.300C4.500-16.300 8-13.500 11.800-7V5.200C11.800 6.800 11 7.600 9.800 7.600H4V16H-4V7.600H-9.800C-11 7.600-11.800 6.800-11.800 5.200V-7C-8-13.500-4.500-16.300 0-16.300Z"/>
<path transform="translate(893.5 1048.0)" fill="#000" d="M0-16.300C4.500-16.300 8-13.500 11.800-7V5.200C11.800 6.800 11 7.600 9.800 7.600H4V16H-4V7.600H-9.800C-11 7.600-11.800 6.800-11.800 5.200V-7C-8-13.500-4.500-16.300 0-16.300Z"/>
<path transform="translate(840.7 1068.0)" fill="#000" d="M0-16.300C4.500-16.300 8-13.500 11.800-7V5.200C11.800 6.800 11 7.600 9.800 7.600H4V16H-4V7.600H-9.800C-11 7.600-11.800 6.800-11.800 5.200V-7C-8-13.500-4.500-16.300 0-16.300Z"/>
<path transform="translate(967.0 920.8)" fill="#000" d="M0-16.300C4.500-16.300 8-13.500 11.800-7V5.200C11.800 6.800 11 7.600 9.800 7.600H4V16H-4V7.600H-9.800C-11 7.600-11.800 6.800-11.800 5.200V-7C-8-13.500-4.500-16.300 0-16.300Z"/>
<path transform="translate(1123.7 1050.0)" fill="#000" d="M0-16.300C4.500-16.300 8-13.500 11.800-7V5.200C11.800 6.800 11 7.600 9.800 7.600H4V16H-4V7.600H-9.800C-11 7.600-11.800 6.800-11.800 5.200V-7C-8-13.500-4.500-16.300 0-16.300Z"/>
<path transform="translate(1479.5 946.5)" fill="#000" d="M0-16.300C4.500-16.300 8-13.500 11.800-7V5.200C11.800 6.800 11 7.600 9.800 7.600H4V16H-4V7.600H-9.800C-11 7.600-11.800 6.800-11.800 5.200V-7C-8-13.500-4.500-16.300 0-16.300Z"/>
<path transform="translate(1703.0 915.9)" fill="#000" d="M0-16.300C4.500-16.300 8-13.500 11.800-7V5.200C11.800 6.800 11 7.600 9.800 7.600H4V16H-4V7.600H-9.800C-11 7.600-11.800 6.800-11.800 5.200V-7C-8-13.500-4.500-16.300 0-16.300Z"/>
<path transform="translate(1616.4 995.2)" fill="#000" d="M0-16.300C4.500-16.300 8-13.500 11.800-7V5.200C11.800 6.800 11 7.600 9.800 7.600H4V16H-4V7.600H-9.800C-11 7.600-11.800 6.800-11.800 5.200V-7C-8-13.500-4.500-16.300 0-16.300Z"/>
<path transform="translate(1711.8 1031.4)" fill="#000" d="M0-16.300C4.500-16.300 8-13.500 11.800-7V5.200C11.800 6.800 11 7.600 9.800 7.600H4V16H-4V7.600H-9.800C-11 7.600-11.800 6.800-11.800 5.200V-7C-8-13.500-4.500-16.300 0-16.300Z"/>
<path transform="translate(410.0 863.6)" fill="#000" d="M0-16.300C4.500-16.300 8-13.500 11.800-7V5.200C11.800 6.800 11 7.600 9.800 7.600H4V16H-4V7.600H-9.800C-11 7.600-11.800 6.800-11.800 5.200V-7C-8-13.500-4.500-16.300 0-16.300Z"/>
<circle cx="951" cy="948.500" r="12.300" fill="#000"/><path d="M951 958l7 6" stroke="#000" stroke-width="7"/>
<circle cx="289.3" cy="904.0" r="11.200" fill="#000" stroke="#2f7d2f" stroke-width="2.200"/>
<circle cx="253.5" cy="930.0" r="11.200" fill="#000" stroke="#2f7d2f" stroke-width="2.200"/>
<circle cx="405.0" cy="973.7" r="11.200" fill="#000" stroke="#2f7d2f" stroke-width="2.200"/>
<circle cx="248.6" cy="1005.0" r="11.200" fill="#000" stroke="#2f7d2f" stroke-width="2.200"/>
<circle cx="298.5" cy="1013.8" r="11.200" fill="#000" stroke="#2f7d2f" stroke-width="2.200"/>
<circle cx="514.0" cy="977.0" r="11.200" fill="#000" stroke="#2f7d2f" stroke-width="2.200"/>
<circle cx="566.0" cy="989.7" r="11.200" fill="#000" stroke="#2f7d2f" stroke-width="2.200"/>
<circle cx="493.4" cy="1007.0" r="11.200" fill="#000" stroke="#2f7d2f" stroke-width="2.200"/>
<circle cx="492.4" cy="1060.8" r="11.200" fill="#000" stroke="#2f7d2f" stroke-width="2.200"/>
<circle cx="1152.5" cy="1065.7" r="11.200" fill="#000" stroke="#2f7d2f" stroke-width="2.200"/>
<circle cx="1455.7" cy="922.3" r="11.200" fill="#000" stroke="#2f7d2f" stroke-width="2.200"/>
<circle cx="838.0" cy="862.0" r="11.200" fill="#000" stroke="#2f7d2f" stroke-width="2.200"/>
<circle cx="640.0" cy="860.0" r="11.200" fill="#000" stroke="#2f7d2f" stroke-width="2.200"/>
<g transform="translate(283.8 1035.4)"><circle r="28.400" fill="#fff" stroke="#222" stroke-width="1.100"/>
<path d="M0-17V8" stroke="#8c8c8c" stroke-width="3.400"/><path d="M-2.500-2C-3-12-10-13-10.500-4M2.500-2C3-12 10-13 10.500-4M-4.500 3C-6-9-15-10-15.500 2M4.500 3C6-9 15-10 15.500 2" fill="none" stroke="#9a9a9a" stroke-width="1.500"/>
<path d="M-2.500 5h5l1.500 5 7.500 7.500h-23l7.500-7.500z" fill="#140a08"/><path d="M-18 18.300h36" stroke="#333" stroke-width="1.400"/></g>
<g transform="translate(369.0 1064.7)"><circle r="28.400" fill="#fff" stroke="#222" stroke-width="1.100"/>
<path d="M0-17V8" stroke="#8c8c8c" stroke-width="3.400"/><path d="M-2.500-2C-3-12-10-13-10.500-4M2.500-2C3-12 10-13 10.500-4M-4.500 3C-6-9-15-10-15.500 2M4.500 3C6-9 15-10 15.500 2" fill="none" stroke="#9a9a9a" stroke-width="1.500"/>
<path d="M-2.500 5h5l1.500 5 7.500 7.500h-23l7.500-7.500z" fill="#140a08"/><path d="M-18 18.300h36" stroke="#333" stroke-width="1.400"/></g>
<g transform="translate(937.0 1052.0)"><circle r="28.400" fill="#fff" stroke="#222" stroke-width="1.100"/>
<path d="M0-17V8" stroke="#8c8c8c" stroke-width="3.400"/><path d="M-2.500-2C-3-12-10-13-10.500-4M2.500-2C3-12 10-13 10.500-4M-4.500 3C-6-9-15-10-15.500 2M4.500 3C6-9 15-10 15.500 2" fill="none" stroke="#9a9a9a" stroke-width="1.500"/>
<path d="M-2.500 5h5l1.500 5 7.500 7.500h-23l7.500-7.500z" fill="#140a08"/><path d="M-18 18.300h36" stroke="#333" stroke-width="1.400"/></g>
<g font-family="Liberation Sans, sans-serif" font-size="22" fill="#000" transform="scale(.885 1)">
<text x="251.6" y="887.5">out</text>
<text x="251.6" y="914.9">here?</text>
<text x="259.2" y="990.3">Ruin</text>
<text x="421.5" y="879.0">Gate</text>
<text x="421.5" y="904.0">to</text>
<text x="421.5" y="931.5">outdoor</text>
<text x="421.5" y="959.0">shower</text>
<text x="552.0" y="934.5">Water</text>
<text x="552.0" y="962.0">point</text>
<text x="527.0" y="991.3">Fence</text>
<text x="527.0" y="1018.7">needs</text>
<text x="527.0" y="1046.0">repair</text>
<text x="1253.6" y="998.0">Downpipe</text>
<text x="1253.6" y="1025.6">needs</text>
<text x="1253.6" y="1053.0">repair</text>
<text x="1604.5" y="880.0">paddock</text>
<text x="1604.5" y="907.0">gate</text>
</g></svg></div>
<div class="dlg"></div>
<div class="a" style="left:194px;top:62px;width:331px;height:495px;box-sizing:border-box;background:#fff;border:1px solid #a9a9a9;border-top-color:#9c9c9c;box-shadow:inset 0 0 0 1px #e6e6e6"></div>
<div class="a" style="left:196px;top:64px;width:328px;height:32px;background:#dcdcdc"></div>
<span class="t" style="left:241.7px;top:64.2px;font-size:26px;line-height:31px;font-weight:bold;color:#000;letter-spacing:0.45px;font-style:normal;">Favorites</span>
<span class="t" style="left:241.7px;top:96.2px;font-size:26px;line-height:31px;font-weight:bold;color:#000;letter-spacing:0.20px;font-style:normal;">All</span>
<span class="t" style="left:241.7px;top:128.2px;font-size:26px;line-height:31px;font-weight:bold;color:#000;letter-spacing:0.80px;font-style:normal;">Tags</span>
<span class="t" style="left:281.7px;top:160.5px;font-size:26px;line-height:31px;font-weight:normal;color:#000;letter-spacing:0.52px;font-style:normal;">Colorful</span>
<span class="t" style="left:281.7px;top:192.5px;font-size:26px;line-height:31px;font-weight:normal;color:#000;letter-spacing:0.20px;font-style:normal;">Grayscale</span>
<span class="t" style="left:281.7px;top:224.5px;font-size:26px;line-height:31px;font-weight:normal;color:#000;letter-spacing:0.34px;font-style:normal;">Showcase</span>
<span class="t" style="left:281.7px;top:256.5px;font-size:26px;line-height:31px;font-weight:normal;color:#000;letter-spacing:0.78px;font-style:normal;">Topology</span>
<span class="t" style="left:241.7px;top:288.2px;font-size:26px;line-height:31px;font-weight:bold;color:#000;letter-spacing:0.37px;font-style:normal;">Smart Groups</span>
<svg class="a" style="left:207px;top:139px" width="18" height="10" viewBox="0 0 18 10"><path d="M1 1h16l-8 8.200z" fill="#5e5e5e"/></svg>
<div class="btn" style="left:194px;top:570px;width:332px;height:48px;"></div>
<span class="t" style="left:299.4px;top:579.5px;font-size:26px;line-height:31px;font-weight:normal;color:#1c1c1c;letter-spacing:0.41px;font-style:normal;">Add Tag...</span>
<div class="btn" style="left:194px;top:630px;width:332px;height:48px;"></div>
<span class="t" style="left:244.9px;top:639.5px;font-size:26px;line-height:31px;font-weight:normal;color:#1c1c1c;letter-spacing:0.27px;font-style:normal;">Add Smart Group...</span>
<div class="btn" style="left:194px;top:690px;width:332px;height:48px;border-color:#c2c2c2"></div>
<span class="t" style="left:265.6px;top:699.5px;font-size:26px;line-height:31px;font-weight:normal;color:#ababab;letter-spacing:0.71px;font-style:normal;">Modify Group</span>
<svg class="a" style="left:503px;top:710px" width="14" height="8" viewBox="0 0 14 8"><path d="M.5 .5h13l-6.500 7z" fill="#5a5a5a"/></svg>
<div class="btn" style="left:194px;top:750px;width:332px;height:48px;"></div>
<span class="t" style="left:285.7px;top:759.5px;font-size:26px;line-height:31px;font-weight:normal;color:#1c1c1c;letter-spacing:0.69px;font-style:normal;">Import / Export</span>
<svg class="a" style="left:503px;top:770px" width="14" height="8" viewBox="0 0 14 8"><path d="M.5 .5h13l-6.500 7z" fill="#5a5a5a"/></svg>
<svg class="a" style="left:251px;top:758px" width="34" height="32" viewBox="0 0 34 32">
<path d="M8 15.500 L25 6.500 M8 15.500 L18.500 25" stroke="#4f7fb5" stroke-width="3.400"/>
<circle cx="8" cy="15.500" r="5.600" fill="#6b9bd1" stroke="#4f7fb5" stroke-width="1.200"/><circle cx="25.500" cy="6.500" r="5.200" fill="#6b9bd1" stroke="#4f7fb5" stroke-width="1.200"/><circle cx="18.500" cy="25.500" r="5.200" fill="#6b9bd1" stroke="#4f7fb5" stroke-width="1.200"/></svg>
<div class="btn" style="left:194px;top:810px;width:160px;height:48px;"></div>
<span class="t" style="left:246.0px;top:819.2px;font-size:26px;line-height:31px;font-weight:normal;color:#1c1c1c;letter-spacing:0.80px;font-style:normal;">Help</span>
<div class="btn" style="left:1744px;top:810px;width:160px;height:48px;"></div>
<span class="t" style="left:1788.9px;top:819.5px;font-size:26px;line-height:31px;font-weight:normal;color:#1c1c1c;letter-spacing:0.66px;font-style:normal;">Close</span>
<div class="a" style="left:537px;top:415px;width:2px;height:32px;background:repeating-linear-gradient(#c4c4c4 0 2px,transparent 2px 4px)"></div>
<div class="a" style="left:541px;top:115px;width:1362px;height:2px;background:#fdfdfd"></div>
<div class="tab" style="left:540px;width:79px"></div>
<div class="tab" style="left:617px;width:176px"></div>
<div class="tab" style="left:791px;width:140px"></div>
<div class="tab" style="left:929px;width:124px"></div>
<div class="tab" style="left:1051px;width:230px"></div>
<div class="tab" style="left:1511px;width:259px"></div>
<div class="a" style="left:541px;top:113px;width:1362px;height:2px;background:#b0b0b0"></div>
<div class="a" style="left:1278px;top:62px;width:234px;height:53px;box-sizing:border-box;border:2px solid #a6a6a6;border-bottom:none;border-radius:6px 6px 0 0;background:linear-gradient(#ffffff 40%,#f6f6f6)"></div>
<div class="a" style="left:1280px;top:115px;width:230px;height:3px;background:#f5f5f5"></div>
<span class="t" style="left:563.4px;top:77.5px;font-size:26px;line-height:31px;font-weight:normal;color:#1c1c1c;letter-spacing:0.13px;font-style:normal;">All</span>
<span class="t" style="left:680.1px;top:77.5px;font-size:26px;line-height:31px;font-weight:normal;color:#1c1c1c;letter-spacing:0.85px;font-style:normal;">Marker</span>
<span class="t" style="left:854.6px;top:77.5px;font-size:26px;line-height:31px;font-weight:normal;color:#1c1c1c;letter-spacing:0.09px;font-style:normal;">Line</span>
<span class="t" style="left:992.3px;top:77.5px;font-size:26px;line-height:31px;font-weight:normal;color:#1c1c1c;letter-spacing:0.12px;font-style:normal;">Fill</span>
<span class="t" style="left:1113.7px;top:77.5px;font-size:26px;line-height:31px;font-weight:normal;color:#1c1c1c;letter-spacing:0.20px;font-style:normal;">Color Ramp</span>
<span class="t" style="left:1342.3px;top:75.5px;font-size:26px;line-height:31px;font-weight:normal;color:#1c1c1c;letter-spacing:0.57px;font-style:normal;">Text Format</span>
<span class="t" style="left:1573.9px;top:77.5px;font-size:26px;line-height:31px;font-weight:normal;color:#1c1c1c;letter-spacing:0.52px;font-style:normal;">Label Settings</span>
<span class="t" style="left:1304.2px;top:78.8px;font-size:15px;line-height:18px;font-weight:bold;color:#2e3436;letter-spacing:0.49px;font-style:normal;-webkit-text-stroke:.45px #2e3436;">abc</span>
<svg class="a" style="left:640px;top:74px" width="32" height="32" viewBox="0 0 32 32"><g fill="#f4f4f4" stroke="#8a8c86" stroke-width="1.300"><circle cx="25" cy="5" r="2.600"/><circle cx="11" cy="11" r="2.600"/><circle cx="7" cy="25" r="2.600"/></g></svg>
<svg class="a" style="left:812px;top:74px" width="36" height="32" viewBox="0 0 36 32"><path d="M5 9 L13 28 L22 5 L31 5" fill="none" stroke="#85877f" stroke-width="1.300"/><g fill="#f4f4f4" stroke="#85877f" stroke-width="1.300"><circle cx="5" cy="9" r="2.400"/><circle cx="13" cy="28" r="2.400"/><circle cx="22" cy="5" r="2.400"/><circle cx="31" cy="5" r="2.400"/></g></svg>
<svg class="a" style="left:950px;top:75px" width="36" height="28" viewBox="0 0 36 28"><defs><linearGradient id="fg" x1="0" y1="0" x2="0" y2="1"><stop offset="0" stop-color="#f2f2f2"/><stop offset="1" stop-color="#d2d2d2"/></linearGradient></defs>
<path d="M3 8 C3 2 10 2 17 5 C24 2 33 2 33 8 V17 C33 22 26 18 19 18 C12 18 8 26 4 23 C2 20 3 14 3 8 Z" fill="url(#fg)" stroke="#8a8c86" stroke-width="1.400"/></svg>
<svg class="a" style="left:1075px;top:75px" width="30" height="30" viewBox="0 0 30 30"><path d="M15 15 L15.00 1.00 A14 14 0 0 1 24.90 5.10 Z" fill="#f9e54a"/><path d="M15 15 L24.90 5.10 A14 14 0 0 1 29.00 15.00 Z" fill="#e8982a"/><path d="M15 15 L29.00 15.00 A14 14 0 0 1 24.90 24.90 Z" fill="#e83030"/><path d="M15 15 L24.90 24.90 A14 14 0 0 1 15.00 29.00 Z" fill="#a8182a"/><path d="M15 15 L15.00 29.00 A14 14 0 0 1 5.10 24.90 Z" fill="#e47fd0"/><path d="M15 15 L5.10 24.90 A14 14 0 0 1 1.00 15.00 Z" fill="#6a98d8"/><path d="M15 15 L1.00 15.00 A14 14 0 0 1 5.10 5.10 Z" fill="#3eb030"/><path d="M15 15 L5.10 5.10 A14 14 0 0 1 15.00 1.00 Z" fill="#8ede30"/></svg>
<svg class="a" style="left:1535px;top:80px" width="32" height="20" viewBox="0 0 32 20"><path d="M6.500 2.500 H28.500 V17.500 H6.500 L1.800 10 Z" fill="#f8e45c" stroke="#c4a000" stroke-width="1.800" stroke-linejoin="round"/>
<text x="8.300" y="14" font-family="Liberation Sans, sans-serif" font-size="10.500" font-weight="bold" fill="#222" letter-spacing=".5">abc</text></svg>
<div class="a" style="left:540px;top:126px;width:1363px;height:611px;box-sizing:border-box;background:#fff;border:1.500px solid #b8b8b8"></div>
<div class="a" style="left:558px;top:142px;width:180px;height:161px;box-sizing:border-box;border:1.200px solid #b9b9b9;border-radius:9px;background:#fff"></div>
<span class="t" style="left:632.8px;top:209.4px;font-size:23px;line-height:28px;font-weight:normal;color:#4a4a4a;letter-spacing:2.05px;font-style:normal;">Aa</span>
<div class="a" style="left:584.500px;top:306.500px;width:127px;height:21px;box-sizing:border-box;border:1.500px solid #a4c5f2;border-radius:4px;background:#eef4fe"></div>
<span class="t" style="left:590.3px;top:305.7px;font-size:18px;line-height:22px;font-weight:normal;color:#111;letter-spacing:0.58px;font-style:normal;">Kartoza Style</span>
<svg class="a" style="left:740px;top:120px" width="680" height="130" viewBox="740 120 680 130">
<path d="M1405.600 133.800 L770 229" stroke="#e8391f" stroke-width="4.600" fill="none"/><path d="M750.400 231.400 L774 216.400 L777 240.500 Z" fill="#e8391f"/></svg>
<div class="a" style="left:704px;top:316px;width:430px;height:373px;box-sizing:border-box;border:2px solid #141414;background:#fff;box-shadow:0 5px 22px rgba(0,0,0,.16)"></div>
<span class="t" style="left:712.1px;top:322.8px;font-size:26px;line-height:31px;font-weight:bold;color:#222;letter-spacing:0.42px;font-style:normal;">Kartoza Style</span>
<span class="t" style="left:713.5px;top:377.7px;font-size:22px;line-height:26px;font-weight:normal;color:#222;letter-spacing:0.32px;font-style:italic;">Grayscale</span>
<div class="a" style="left:712px;top:428.500px;width:413.500px;height:253px;box-sizing:border-box;border:1.200px solid #bcbcbc;border-radius:9px;background:#fff"></div>
<span class="t" style="left:903.1px;top:541.8px;font-size:23px;line-height:28px;font-weight:normal;color:#4a4a4a;letter-spacing:2.05px;font-style:normal;">Aa</span>
<div class="btn" style="left:540px;top:750px;width:56px;height:48px;border-color:#4a90e2;background:linear-gradient(#ffffff,#e2e6ee)"></div>
<svg class="a" style="left:552px;top:758px" width="32" height="32" viewBox="0 0 32 32"><path d="M10.1 1.8H21.9V10.1H30.2V21.9H21.9V30.2H10.1V21.9H1.8V10.1H10.1Z" fill="#4e8a4e"/><path d="M11.799999999999999 3.5H20.2V11.799999999999999H28.5V20.2H20.2V28.5H11.799999999999999V20.2H3.5V11.799999999999999H11.799999999999999Z" fill="#fff"/><path d="M13.5 5.2H18.5V13.5H26.8V18.5H18.5V26.8H13.5V18.5H5.2V13.5H13.5Z" fill="#4e8a4e"/></svg>
<div class="btn" style="left:608px;top:750px;width:56px;height:48px;border-color:#a6a6a6"></div>
<svg class="a" style="left:620px;top:766px" width="32" height="16" viewBox="0 0 32 16"><rect x="1.800" y="1.900" width="28.300" height="12.200" fill="#ef4048"/><rect x="4" y="4.100" width="23.900" height="7.800" fill="#fff"/><rect x="6" y="6" width="19.900" height="4" fill="#ef4048"/></svg>
<div class="btn" style="left:676px;top:750px;width:56px;height:48px;border-color:#a6a6a6"></div>
<svg class="a" style="left:686px;top:755px" width="36" height="38" viewBox="0 0 36 38">
<path d="M4 3.500 H19 L26 10.500 V34.500 H4 Z" fill="#fff" stroke="#9a9a9a" stroke-width="1.600"/><path d="M19 3.500 V10.500 H26" fill="#e8e8e8" stroke="#9a9a9a" stroke-width="1"/>
<path d="M25.500 4.500 L31.500 8 L17 31 L11.500 33.800 L11.300 27.500 Z" fill="#e4c934" stroke="#9a8418" stroke-width="1"/><path d="M27.800 6 L13.500 29" stroke="#f7eb8c" stroke-width="1.600"/>
<path d="M25.500 4.500 L31.500 8 L30 10.400 L24 6.900 Z" fill="#e8e4d8" stroke="#aaa" stroke-width=".8"/>
<path d="M11.300 27.500 L17 31 L11.500 33.800 Z" fill="#c9c9c9" stroke="#777" stroke-width=".8"/><path d="M11.400 31.300 L13.600 32.700 L11.500 33.800 Z" fill="#333"/></svg>
<div class="a" style="left:1270px;top:750px;width:48px;height:46px;box-sizing:border-box;border:2px solid #b4b4b4;border-radius:5px;background:#dcdcdc"></div>
<svg class="a" style="left:1280px;top:758px" width="28" height="28" viewBox="0 0 28 28"><rect x="1" y="1" width="26" height="26" fill="#fff" stroke="#6f9ad4" stroke-width="1"/><rect x="3.2" y="3.2" width="5.400" height="5.400" fill="#6f9ad4"/><rect x="11.4" y="3.2" width="5.400" height="5.400" fill="#6f9ad4"/><rect x="19.6" y="3.2" width="5.400" height="5.400" fill="#6f9ad4"/><rect x="3.2" y="11.4" width="5.400" height="5.400" fill="#6f9ad4"/><rect x="11.4" y="11.4" width="5.400" height="5.400" fill="#6f9ad4"/><rect x="19.6" y="11.4" width="5.400" height="5.400" fill="#6f9ad4"/><rect x="3.2" y="19.6" width="5.400" height="5.400" fill="#6f9ad4"/><rect x="11.4" y="19.6" width="5.400" height="5.400" fill="#6f9ad4"/><rect x="19.6" y="19.6" width="5.400" height="5.400" fill="#6f9ad4"/></svg>
<svg class="a" style="left:1328px;top:758px" width="28" height="28" viewBox="0 0 28 28"><rect x="1" y="1" width="26" height="26" fill="#fff" stroke="#6f9ad4" stroke-width="1"/><rect x="1.500" y="1.500" width="25" height="6.500" fill="#bcd6f2"/>
<path d="M4.500 4.800h5M12 4.800h10.500" stroke="#6f9ad4" stroke-width="2.200"/><path d="M4.500 11.800h5M12 11.800h10.500M4.500 16h5M12 16h10.500M4.500 20.200h5M12 20.200h10.500M4.500 24.200h5M12 24.200h10.500" stroke="#6f9ad4" stroke-width="1.300"/></svg>
<div class="a" style="left:1378px;top:750px;width:526px;height:48px;box-sizing:border-box;border:2px solid #ababab;border-radius:5px;background:#fff"></div>
<svg class="a" style="left:1392px;top:760px" width="32" height="30" viewBox="0 0 32 30"><circle cx="12.500" cy="11.500" r="8.300" fill="none" stroke="#808080" stroke-width="2.200"/><path d="M18.500 17.500 L27 26" stroke="#808080" stroke-width="2.600" stroke-linecap="round"/></svg>
<span class="t" style="left:1435.7px;top:759.5px;font-size:26px;line-height:31px;font-weight:normal;color:#7f7f7f;letter-spacing:0.47px;font-style:normal;">Filter text symbols...</span>
</body></html>
